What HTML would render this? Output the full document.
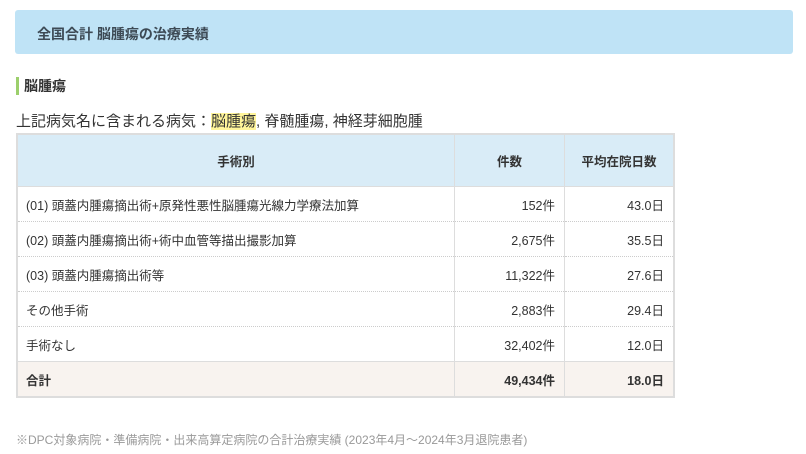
<!DOCTYPE html>
<html><head><meta charset="utf-8"><style>
body{margin:0;width:806px;height:454px;background:#fff;font-family:"Liberation Sans","Noto Sans CJK JP",sans-serif;color:#333;position:relative;overflow:hidden}
.hd{position:absolute;left:15px;top:10px;width:778px;height:44px;background:#bfe3f6;border-radius:3px}
.hd span{position:absolute;left:22px;top:14px;font-size:14px;font-weight:bold;color:#3d4a55}
.sec{position:absolute;left:16px;top:77px;height:18px;border-left:3px solid #9ccf6c;padding-left:5px;font-size:14px;font-weight:bold;line-height:18px}
.line{position:absolute;left:16px;top:113px;font-size:15px;line-height:18px}
.line mark{background:#fff59a;color:#333}
table{position:absolute;left:16px;top:133px;width:659px;border-collapse:collapse;border:2px solid #ddd;font-size:12.5px}
th{background:#d9ecf7;height:51px;padding:0;font-weight:bold;border-left:1px solid #ddd;border-bottom:1px solid #ddd}
td{height:34px;border-left:1px solid #ddd;border-bottom:1px dotted #ccc;padding:0 9px 0 8px}
td.n{text-align:right}
tr.t td{background:#f8f3ef;font-weight:bold;border-top:1px solid #ddd;border-bottom:none}
.ft{position:absolute;left:16px;top:431px;font-size:12px;color:#999}
</style></head><body>
<div class="hd"><span>全国合計 脳腫瘍の治療実績</span></div>
<div class="sec">脳腫瘍</div>
<div class="line">上記病気名に含まれる病気：<mark>脳腫瘍</mark>, 脊髄腫瘍, 神経芽細胞腫</div>
<table>
<tr><th style="width:436px">手術別</th><th style="width:109px">件数</th><th>平均在院日数</th></tr>
<tr><td>(01) 頭蓋内腫瘍摘出術+原発性悪性脳腫瘍光線力学療法加算</td><td class="n">152件</td><td class="n">43.0日</td></tr>
<tr><td>(02) 頭蓋内腫瘍摘出術+術中血管等描出撮影加算</td><td class="n">2,675件</td><td class="n">35.5日</td></tr>
<tr><td>(03) 頭蓋内腫瘍摘出術等</td><td class="n">11,322件</td><td class="n">27.6日</td></tr>
<tr><td>その他手術</td><td class="n">2,883件</td><td class="n">29.4日</td></tr>
<tr><td>手術なし</td><td class="n">32,402件</td><td class="n">12.0日</td></tr>
<tr class="t"><td>合計</td><td class="n">49,434件</td><td class="n">18.0日</td></tr>
</table>
<div class="ft">※DPC対象病院・準備病院・出来高算定病院の合計治療実績 (2023年4月～2024年3月退院患者)</div>
</body></html>
